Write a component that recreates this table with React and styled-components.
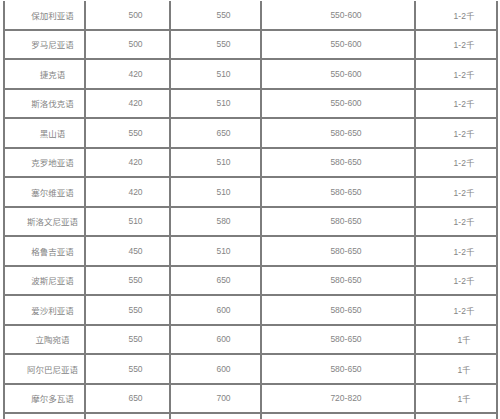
import React from 'react';
import styled, { createGlobalStyle } from 'styled-components';

const GlobalStyle = createGlobalStyle`
   html, body {
      margin: 0;
      padding: 0;
      background: #ffffff;
      overflow: hidden;
   }
   body {
      font-family: 'Liberation Sans', 'Noto Sans CJK SC', sans-serif;
   }
`;

const rows = [
   ['保加利亚语', 500, 550, '550-600', '1-2千'],
   ['罗马尼亚语', 500, 550, '550-600', '1-2千'],
   ['捷克语', 420, 510, '550-600', '1-2千'],
   ['斯洛伐克语', 420, 510, '550-600', '1-2千'],
   ['黑山语', 550, 650, '580-650', '1-2千'],
   ['克罗地亚语', 420, 510, '580-650', '1-2千'],
   ['塞尔维亚语', 420, 510, '580-650', '1-2千'],
   ['斯洛文尼亚语', 510, 580, '580-650', '1-2千'],
   ['格鲁吉亚语', 450, 510, '580-650', '1-2千'],
   ['波斯尼亚语', 550, 650, '580-650', '1-2千'],
   ['爱沙利亚语', 550, 600, '580-650', '1-2千'],
   ['立陶宛语', 550, 600, '580-650', '1千'],
   ['阿尔巴尼亚语', 550, 600, '580-650', '1千'],
   ['摩尔多瓦语', 650, 700, '720-820', '1千'],
   // next row starts just below the fold, only its lines show
   ['', '', '', '', ''],
];

// column widths incl. right border
const cols = [81, 85, 91, 154, 82];

const PriceTable = () => {
   return (
      <Table>
         <colgroup>
            {cols.map((w, i) => (
               <col key={i} style={{ width: w }} />
            ))}
         </colgroup>
         <tbody>
            {rows.map((row, idx) => (
               <Row key={idx}>
                  {row.map((cell, i) => (
                     <Cell key={i}>{cell}</Cell>
                  ))}
               </Row>
            ))}
         </tbody>
      </Table>
   );
};

const Table = styled.table`
   table-layout: fixed;
   border-collapse: separate;
   border-spacing: 0;
   width: 495px;
   margin: 1px 0 0 3px;
   border-left: 2px solid #7d7d7d;
`;

const Row = styled.tr`
   height: 29.5px;
`;

const Cell = styled.td`
   box-sizing: border-box;
   padding: 0 0 0 16px;
   text-align: center;
   vertical-align: middle;
   border-right: 2px solid #7d7d7d;
   border-bottom: 2px solid #7d7d7d;
   font-size: 8.5px;
   color: #858585;
   white-space: nowrap;
`;

const App = () => (
   <>
      <GlobalStyle />
      <PriceTable />
   </>
);

export default App;
